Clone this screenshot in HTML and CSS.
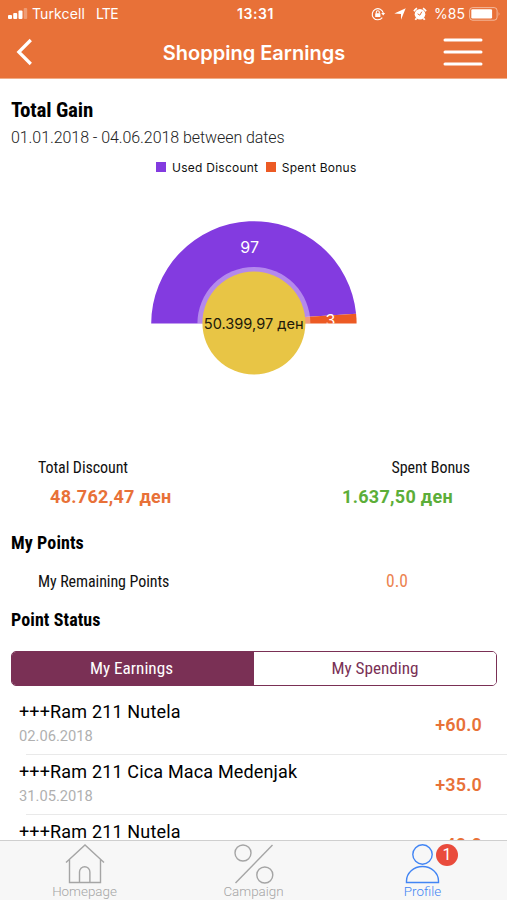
FILE: index.html
```
<!DOCTYPE html>
<html lang="en">
<head>
    <meta charset="UTF-8">
    <meta name="viewport" content="width=device-width, initial-scale=1.0">
    <title>Shopping Earnings</title>
    <link rel="stylesheet" href="styles.css">
</head>
<body>
    <header>
        <div class="status-bar">
            <div class="status-left">
                <svg class="signal" width="20" height="12" viewBox="0 0 20 12" fill="#fff">
                    <rect x="0" y="7" width="4" height="4" rx="1"/>
                    <rect x="5.2" y="5" width="4" height="6" rx="1"/>
                    <rect x="10.5" y="2.5" width="4" height="8.5" rx="1"/>
                    <rect x="15.7" y="0" width="3.5" height="11" rx="1" opacity=".3"/>
                </svg>
                <span class="carrier">Turkcell</span>
                <span class="network">LTE</span>
            </div>
            <span class="clock">13:31</span>
            <div class="status-right">
                <svg width="15" height="14" viewBox="0 0 15 14" fill="none" stroke="#fff" stroke-width="1.1">
                    <path d="M11.3 10.6A5.6 5.6 0 1 1 12.3 6"/>
                    <path d="M10.2 6h4l-2 2.6z" fill="#fff" stroke="none"/>
                    <rect x="4.2" y="6.2" width="5.2" height="3.8" rx=".6" fill="#fff" stroke="none"/>
                    <path d="M5.3 6.5V5.2a1.5 1.5 0 0 1 3 0v1.3"/>
                </svg>
                <svg class="arrow" width="12" height="12" viewBox="0 0 12 12" fill="#fff">
                    <path d="M11.7.3L7 11.7V6.1L.3 5.5z"/>
                </svg>
                <svg class="alarm" width="14" height="14" viewBox="0 0 14 14">
                    <circle cx="7" cy="7.3" r="5.3" fill="#fff"/>
                    <path d="M1 4.2A8 8 0 0 1 4 1.3M13 4.2A8 8 0 0 0 10 1.3M3.6 11.2l-1.3 1.6M10.4 11.2l1.3 1.6" stroke="#fff" stroke-width="1.8" fill="none"/>
                    <path d="M4.6 6.8L6.9 8.2 8.8 4.7" fill="none" stroke="#e87138" stroke-width="1"/>
                </svg>
                <span class="percent">%85</span>
                <svg class="battery" width="32" height="14" viewBox="0 0 32 14">
                    <rect x=".6" y=".6" width="27.5" height="12.6" rx="3" fill="none" stroke="#fff" stroke-opacity=".5"/>
                    <rect x="2.3" y="2.3" width="20.8" height="9.2" rx="1.2" fill="#fff"/>
                    <path d="M29.6 4.8q1.8 2.1 0 4.2z" fill="#fff" opacity=".5"/>
                </svg>
            </div>
        </div>
        <nav class="nav-bar">
            <svg width="18" height="28" viewBox="0 0 18 28" fill="none" stroke="#fff" stroke-width="3.2">
                <path d="M15.8 2L3.8 14l12 12" stroke-linecap="butt" stroke-linejoin="miter"/>
            </svg>
            <h1>Shopping Earnings</h1>
            <svg width="40" height="28" viewBox="0 0 40 28" stroke="#fff" stroke-width="3" stroke-linecap="round">
                <path d="M2 2h36M2 14h36M2 26h36"/>
            </svg>
        </nav>
    </header>

    <main>
        <h2 class="gain-title">Total Gain</h2>
        <p class="dates">01.01.2018 - 04.06.2018 between dates</p>

        <div class="legend">
            <i class="used"></i><span>Used Discount</span>
            <i class="spent"></i><span>Spent Bonus</span>
        </div>

        <svg class="chart" width="507" height="210" viewBox="0 180 507 210">
            <path d="M151.2 323.5A102.7 102.7 0 0 1 356.1 313.8L253.9 320.2V323.5z" fill="#833be0"/>
            <path d="M356.1 313.8A102.7 102.7 0 0 1 356.6 323.5H253.9V320.2z" fill="#ec5a24"/>
            <path d="M197.4 323.5A56.5 56.5 0 0 1 310.4 323.5z" fill="#fff" opacity=".4"/>
            <circle cx="253.9" cy="323" r="51.5" fill="#e8c545"/>
            <text class="slice" x="249.7" y="252.5">97</text>
            <svg x="320" y="300" width="24" height="23.5" viewBox="320 300 24 23.5">
                <text class="slice" x="330.5" y="325.5">3</text>
            </svg>
            <text class="center" x="253.7" y="329">50.399,97 ден</text>
        </svg>

        <div class="totals">
            <div class="total">
                <p class="label">Total Discount</p>
                <p class="amount orange">48.762,47 ден</p>
            </div>
            <div class="total right">
                <p class="label">Spent Bonus</p>
                <p class="amount green">1.637,50 ден</p>
            </div>
        </div>

        <h2>My Points</h2>
        <div class="points">
            <span class="label">My Remaining Points</span>
            <span class="value">0.0</span>
        </div>
        <h2>Point Status</h2>

        <div class="tabs">
            <button class="active">My Earnings</button>
            <button>My Spending</button>
        </div>

        <ul>
            <li>
                <div><p class="name">+++Ram 211 Nutela</p><p class="day">02.06.2018</p></div>
                <b>+60.0</b>
            </li>
            <li>
                <div><p class="name">+++Ram 211 Cica Maca Medenjak</p><p class="day">31.05.2018</p></div>
                <b>+35.0</b>
            </li>
            <li>
                <div><p class="name">+++Ram 211 Nutela</p><p class="day">31.05.2018</p></div>
                <b>+40.0</b>
            </li>
        </ul>
    </main>

    <footer>
        <a>
            <svg width="42" height="44" viewBox="0 0 42 44">
                <path d="M2 21.5L21 4l19 17.5M5.5 18.5v23h31v-23M15.5 41.5V31a5.2 5.2 0 0 1 10.4 0v10.5"/>
            </svg>
            <span>Homepage</span>
        </a>
        <a>
            <svg width="42" height="44" viewBox="0 0 42 44">
                <circle cx="10" cy="12" r="8"/>
                <circle cx="31.8" cy="34" r="8"/>
                <path d="M2.5 42L39.5 4"/>
            </svg>
            <span>Campaign</span>
        </a>
        <a class="current">
            <svg width="42" height="44" viewBox="0 0 42 44">
                <circle cx="20.5" cy="13.5" r="9.7"/>
                <path d="M4.5 41.5V40a16 14.5 0 0 1 32 0v1.5z"/>
            </svg>
            <span>Profile</span>
            <em>1</em>
        </a>
    </footer>
</body>
</html>
```
FILE: styles.css
```
* {
    box-sizing: border-box;
}

body {
    font-family: Roboto, sans-serif;
    margin: 0;
    background: #fff;
    color: #111;
    display: flex;
    flex-direction: column;
    height: 100vh;
    overflow: hidden;
}

h1, h2, p, ul {
    margin: 0;
    padding: 0;
    white-space: nowrap;
}

svg {
    display: block;
    flex: none;
}

header {
    height: 79px;
    flex: none;
    background: #e87138;
    border-bottom: 1px solid #f0ad87;
    color: #fff;
    font-family: Inter, sans-serif;
}

.status-bar {
    display: grid;
    grid-template-columns: 1fr auto 1fr;
    align-items: center;
    height: 27px;
    padding: 0 6px 0 8px;
    font-size: 14px;
}

.status-left, .status-right {
    display: flex;
    align-items: center;
}

.status-right {
    justify-content: flex-end;
}

.carrier {
    margin-left: 4px;
    letter-spacing: 0.1px;
}

.network {
    margin-left: 11px;
    letter-spacing: -0.6px;
}

.clock {
    font-weight: 600;
    letter-spacing: 0.6px;
    margin-left: 2px;
}

.arrow {
    margin-left: 8px;
}

.alarm {
    margin-left: 7px;
}

.percent {
    margin-left: 7px;
}

.battery {
    margin-left: 4px;
}

.nav-bar {
    display: flex;
    justify-content: space-between;
    align-items: center;
    height: 50px;
    padding: 0 24px 0 15px;
}

h1 {
    font-size: 20px;
    font-weight: 600;
    line-height: 24px;
    margin: 1px 0 0 32px;
}

main {
    flex: 1;
    min-height: 0;
    overflow: hidden;
}

h2 {
    font-family: "Roboto Condensed", Roboto, sans-serif;
    font-stretch: 75%;
    font-size: 18px;
    line-height: 24px;
    font-weight: 700;
    letter-spacing: 0.1px;
    color: #000;
    padding-left: 11px;
}

.gain-title {
    font-size: 21px;
    letter-spacing: -0.2px;
    margin-top: 19px;
}

.dates {
    font-size: 16px;
    font-weight: 300;
    line-height: 20px;
    letter-spacing: -0.07px;
    padding-left: 11px;
    margin-top: 6px;
    color: #222;
}

.legend {
    display: flex;
    align-items: center;
    height: 20px;
    margin-top: 9px;
    padding-left: 156px;
    font-family: Inter, sans-serif;
    font-size: 12px;
    letter-spacing: 0.25px;
}

.legend i {
    width: 10px;
    height: 10px;
    margin-right: 6px;
}

.legend span {
    margin-right: 7.5px;
}

.used {
    background: #833be0;
}

.spent {
    background: #ec5a24;
}

.chart {
    margin-top: 3px;
}

.chart text {
    text-anchor: middle;
    font-family: Inter, sans-serif;
}

.slice {
    font-size: 16px;
    fill: #fff;
}

.center {
    font-size: 14.6px;
    fill: #21190a;
}

.totals {
    display: flex;
    justify-content: space-between;
    padding: 0 37px 0 38px;
    margin-top: 68px;
}

.label {
    font-family: "Roboto Condensed", Roboto, sans-serif;
    font-stretch: 75%;
    font-size: 16px;
    line-height: 20px;
    letter-spacing: -0.08px;
}

.right .label {
    text-align: right;
}

.amount {
    font-size: 18px;
    font-weight: 700;
    line-height: 24px;
    letter-spacing: 0.3px;
    margin-top: 7px;
    margin-left: 12px;
}

.right .amount {
    margin: 7px 17px 0 0;
}

.orange {
    color: #e87138;
}

.green {
    color: #5cae39;
}

.totals + h2 {
    margin-top: 22px;
}

.points {
    display: grid;
    grid-template-columns: 348px auto;
    padding-left: 38px;
    margin: 17px 0 16px;
}

.value {
    font-family: "Roboto Condensed", Roboto, sans-serif;
    font-stretch: 75%;
    font-size: 17.5px;
    line-height: 19px;
    color: #ec8350;
}

.tabs {
    display: flex;
    height: 35px;
    margin: 19px 10px 0 11px;
    border: 1px solid #7a3055;
    border-radius: 5px;
    overflow: hidden;
}

.tabs button {
    flex: 0 0 50%;
    border: 0;
    padding: 0 0 1px;
    background: #fff;
    color: #7a3055;
    font-family: "Roboto Condensed", Roboto, sans-serif;
    font-stretch: 75%;
    font-size: 17.2px;
}

.tabs .active {
    padding-right: 3px;
    background: #7a3055;
    color: #fff;
}

ul {
    list-style: none;
    padding-top: 9px;
}

li {
    display: flex;
    justify-content: space-between;
    align-items: center;
    height: 60px;
    padding: 0 25px 5px 19px;
    background: linear-gradient(#e9e9e9, #e9e9e9) 26px 100% / 100% 1px no-repeat;
}

.name {
    font-size: 18px;
    line-height: 24px;
    letter-spacing: 0.16px;
    color: #000;
}

.day {
    font-size: 14.7px;
    line-height: 20px;
    margin-top: 2px;
    color: #b0b0b0;
}

li b {
    font-size: 18px;
    font-weight: 600;
    letter-spacing: 0.2px;
    margin-top: 3px;
    color: #e87138;
}

footer {
    display: grid;
    grid-template-columns: repeat(3, 1fr);
    flex: none;
    height: 60px;
    background: #f7f7f7;
    border-top: 1px solid #cfcfcf;
}

footer a {
    display: flex;
    flex-direction: column;
    align-items: center;
    position: relative;
    color: #a5a5a5;
    font-size: 13.4px;
    font-weight: 300;
    line-height: 14px;
}

footer svg {
    fill: none;
    stroke: currentColor;
    stroke-width: 1.4;
}

footer .current {
    color: #4285f4;
}

footer em {
    position: absolute;
    left: 98px;
    top: 3px;
    width: 22px;
    height: 22px;
    border-radius: 50%;
    background: #e94b3c;
    color: #fff;
    font-style: normal;
    font-weight: 400;
    font-size: 16px;
    line-height: 22px;
    text-align: center;
}
```
